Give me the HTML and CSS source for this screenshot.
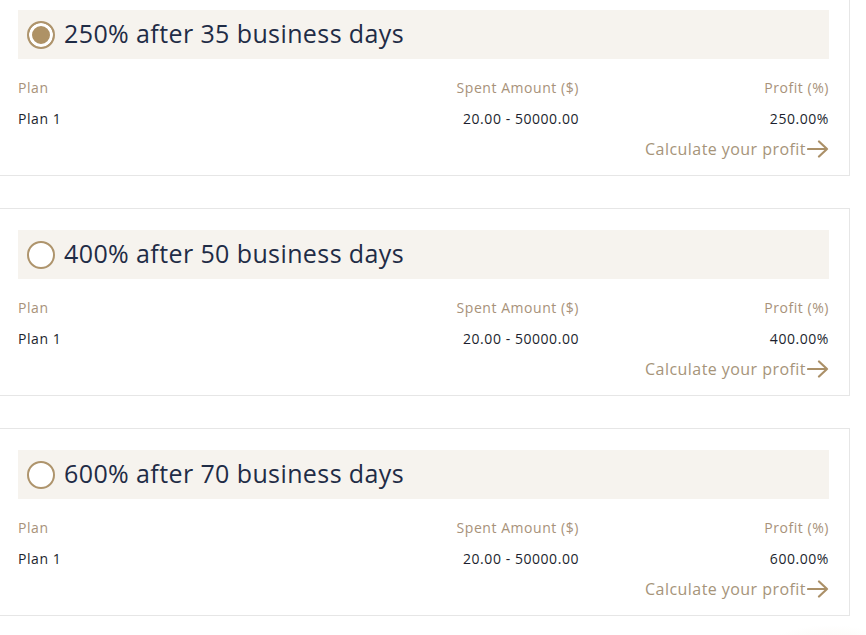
FILE: index.html
```html
<!DOCTYPE html>
<html lang="en">
<head>
<meta charset="utf-8">
<title>Plans</title>
<link rel="stylesheet" href="styles.css">
</head>
<body>
<div class="plans">
  <section class="card">
    <div class="band">
      <span class="radio checked"></span>
      <h2 class="title">250% after 35 business days</h2>
    </div>
    <div class="table">
      <div class="th">Plan</div><div class="th r">Spent Amount ($)</div><div class="th r">Profit (%)</div>
      <div class="td">Plan 1</div><div class="td r">20.00 - 50000.00</div><div class="td r">250.00%</div>
    </div>
    <div class="calc">Calculate your profit<svg class="arrow" width="22" height="18" viewBox="0 0 22 18"><path d="M1 9H20M12 1.5L20 9L12 16.5" fill="none" stroke="#ab9068" stroke-width="2.2" stroke-linecap="round" stroke-linejoin="round"/></svg></div>
  </section>
  <section class="card">
    <div class="band">
      <span class="radio"></span>
      <h2 class="title">400% after 50 business days</h2>
    </div>
    <div class="table">
      <div class="th">Plan</div><div class="th r">Spent Amount ($)</div><div class="th r">Profit (%)</div>
      <div class="td">Plan 1</div><div class="td r">20.00 - 50000.00</div><div class="td r">400.00%</div>
    </div>
    <div class="calc">Calculate your profit<svg class="arrow" width="22" height="18" viewBox="0 0 22 18"><path d="M1 9H20M12 1.5L20 9L12 16.5" fill="none" stroke="#ab9068" stroke-width="2.2" stroke-linecap="round" stroke-linejoin="round"/></svg></div>
  </section>
  <section class="card">
    <div class="band">
      <span class="radio"></span>
      <h2 class="title">600% after 70 business days</h2>
    </div>
    <div class="table">
      <div class="th">Plan</div><div class="th r">Spent Amount ($)</div><div class="th r">Profit (%)</div>
      <div class="td">Plan 1</div><div class="td r">20.00 - 50000.00</div><div class="td r">600.00%</div>
    </div>
    <div class="calc">Calculate your profit<svg class="arrow" width="22" height="18" viewBox="0 0 22 18"><path d="M1 9H20M12 1.5L20 9L12 16.5" fill="none" stroke="#ab9068" stroke-width="2.2" stroke-linecap="round" stroke-linejoin="round"/></svg></div>
  </section>
</div>
</body>
</html>
```
FILE: styles.css
```css
html, body {
  margin: 0;
  padding: 0;
}
body {
  width: 866px;
  height: 635px;
  overflow: hidden;
  background: #ffffff radial-gradient(ellipse 80px 40px at 830px 665px, #f8f6f1 0%, #faf8f4 55%, #ffffff 100%) no-repeat;
  font-family: "Open Sans", "Liberation Sans", sans-serif;
}
.plans {
  display: flex;
  flex-direction: column;
  gap: 32px;
  margin-top: -12px;
}
.card {
  box-sizing: border-box;
  width: 850px;
  height: 188px;
  border: 1px solid #e6e6e6;
  border-left: none;
  background: #fff;
  padding: 21px 20px 0 18px;
}
.band {
  height: 49px;
  background: #f6f3ee;
  display: flex;
  align-items: center;
  padding-left: 9px;
  gap: 9px;
}
.radio {
  box-sizing: border-box;
  width: 28px;
  height: 28px;
  border-radius: 50%;
  border: 2px solid #ae946c;
  background: #fff;
  flex: none;
}
.radio.checked {
  background: #ae9266;
  box-shadow: inset 0 0 0 3px #fff;
}
.title {
  margin: 0 0 3px 0;
  font-family: "Open Sans", "Liberation Sans", sans-serif;
  font-weight: 500;
  font-size: 25px;
  letter-spacing: 0.4px;
  color: #1f2c46;
  line-height: 30px;
}
.table {
  display: grid;
  grid-template-columns: 1fr 250px 250px;
  margin-top: 19px;
  row-gap: 11px;
}
.th, .td {
  font-size: 14px;
  line-height: 20px;
  letter-spacing: 0.55px;
}
.th {
  color: #a8927a;
}
.td {
  color: #1c1f2e;
}
.r {
  text-align: right;
}
.calc {
  margin-top: 9px;
  display: flex;
  justify-content: flex-end;
  align-items: center;
  font-size: 16px;
  letter-spacing: 0.45px;
  line-height: 22px;
  color: #a6947a;
}
.arrow {
  margin-left: 1px;
}
```
